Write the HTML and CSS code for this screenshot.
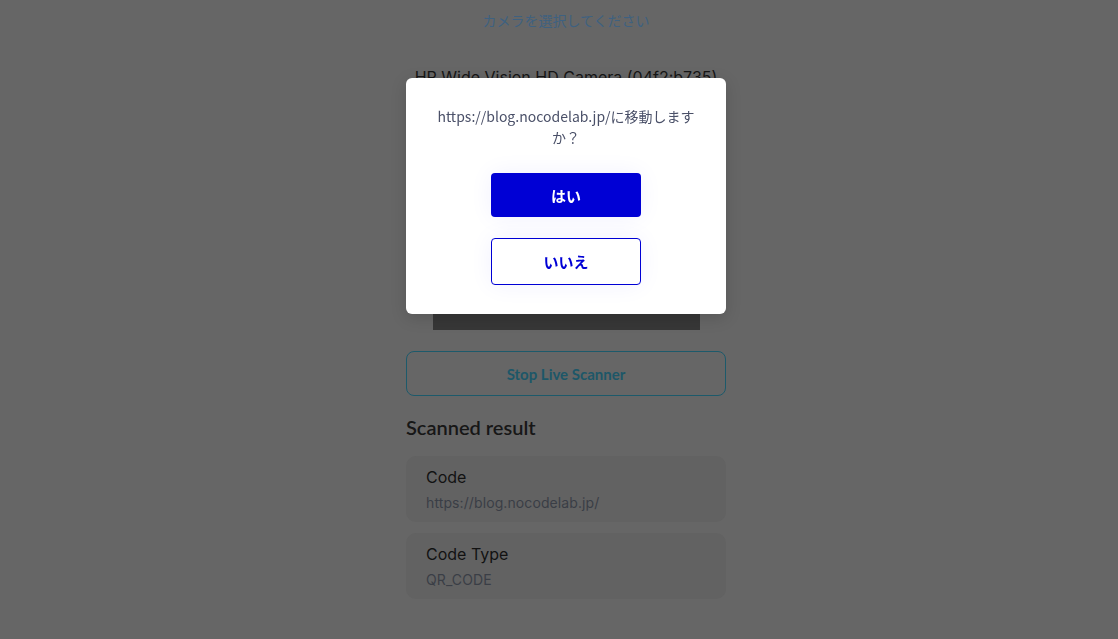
FILE: index.html
```html
<!DOCTYPE html>
<html lang="ja">
<head>
<meta charset="utf-8">
<title>Scanner</title>
<link rel="stylesheet" href="styles.css">
</head>
<body>
<main class="page">
  <div class="select-label">カメラを選択してください</div>
  <div class="camera-name">HP Wide Vision HD Camera (04f2:b735)</div>
  <div class="preview"></div>
  <button class="stop-btn">Stop Live Scanner</button>
  <h2 class="result-title">Scanned result</h2>
  <section class="card">
    <div class="card-label">Code</div>
    <div class="card-value">https://blog.nocodelab.jp/</div>
  </section>
  <section class="card">
    <div class="card-label">Code Type</div>
    <div class="card-value">QR_CODE</div>
  </section>
</main>
<div class="overlay">
  <div class="modal">
    <p class="modal-text">https://blog.nocodelab.jp/に移動しますか？</p>
    <button class="btn-yes">はい</button>
    <button class="btn-no">いいえ</button>
  </div>
</div>
</body>
</html>
```
FILE: styles.css
```css
html, body {
  margin: 0;
  padding: 0;
  height: 100%;
  background: #666666;
  overflow: hidden;
}
.page {
  width: 320px;
  margin: 0 auto;
  padding-left: 14px;
  display: flex;
  flex-direction: column;
  font-family: Inter, "Liberation Sans", sans-serif;
}
.select-label {
  margin-top: 10px;
  text-align: center;
  font-family: "Noto Sans CJK JP", sans-serif;
  font-size: 14px;
  line-height: 20px;
  color: #3e6180;
}
.camera-name {
  margin-top: 35px;
  text-align: center;
  font-size: 16px;
  line-height: 24px;
  color: #161616;
}
.preview {
  margin: 12px auto 0;
  width: 267px;
  height: 229px;
  background: #373737;
}
.stop-btn {
  margin-top: 21px;
  height: 45px;
  border: 1px solid #1d5a6b;
  border-radius: 8px;
  background: transparent;
  font-family: Lato, sans-serif;
  font-weight: 700;
  font-size: 15px;
  color: #1d5768;
  padding: 0;
}
.result-title {
  margin: 18px 0 0;
  font-family: Lato, sans-serif;
  font-weight: 600;
  font-size: 20px;
  line-height: 26px;
  color: #171717;
}
.card {
  margin-top: 16px;
  background: #626262;
  border-radius: 10px;
  padding: 10px 20px 9px;
  display: flex;
  flex-direction: column;
  gap: 5px;
}
.card + .card { margin-top: 11px; }
.card-label {
  font-size: 16px;
  line-height: 22px;
  color: #121212;
}
.card-value {
  font-size: 14px;
  line-height: 20px;
  letter-spacing: 0.1px;
  color: #3a3e46;
}
.overlay {
  position: fixed;
  inset: 0;
  display: flex;
  justify-content: center;
  align-items: flex-start;
  padding-left: 14px;
}
.modal {
  margin-top: 78px;
  width: 320px;
  height: 236px;
  box-sizing: border-box;
  background: #ffffff;
  border-radius: 6px;
  box-shadow: 0 4px 16px rgba(0,0,0,0.15);
  display: flex;
  flex-direction: column;
  align-items: center;
  padding: 28px 30px 0;
}
.modal-text {
  margin: 0;
  text-align: center;
  font-family: "Noto Sans CJK JP", sans-serif;
  font-size: 14px;
  line-height: 21px;
  color: #4a5068;
}
.btn-yes, .btn-no {
  width: 150px;
  font-family: "Noto Sans CJK JP", sans-serif;
  font-weight: 700;
  font-size: 15px;
  border-radius: 4px;
  padding: 0;
  box-shadow: 0 0 24px rgba(40, 40, 255, 0.06);
}
.btn-yes {
  margin-top: 25px;
  height: 44px;
  border: none;
  background: #0000d5;
  color: #ffffff;
}
.btn-no {
  margin-top: 21px;
  height: 47px;
  border: 1px solid #0000d5;
  background: #ffffff;
  color: #0000d5;
}
```
